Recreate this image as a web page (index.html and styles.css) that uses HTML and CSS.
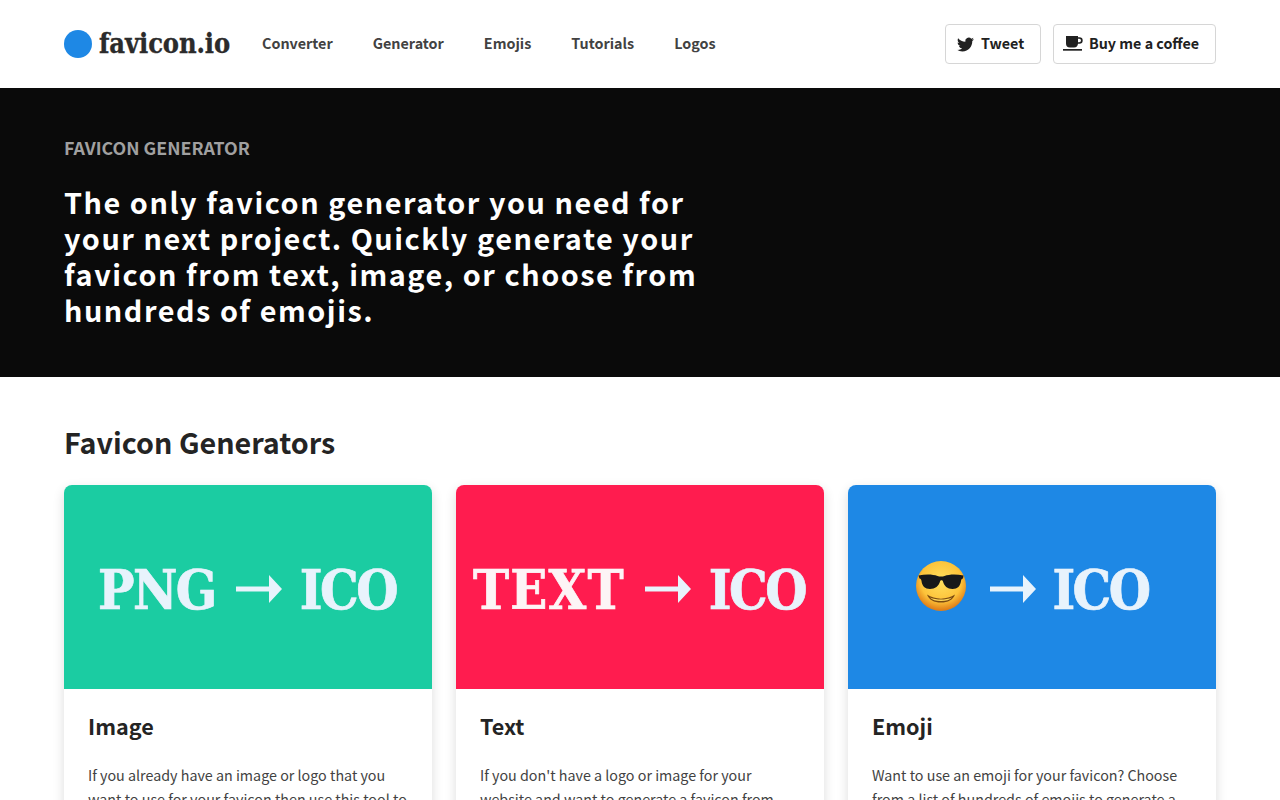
FILE: index.html
```html
<!DOCTYPE html>
<html lang="en">
<head>
<meta charset="utf-8">
<title>favicon.io</title>
<link rel="stylesheet" href="styles.css">
</head>
<body>
<header class="topbar">
  <a class="logo"><span class="logo-dot"></span><span class="logo-text">favicon.io</span></a>
  <nav class="nav">
    <a>Converter</a><a>Generator</a><a>Emojis</a><a>Tutorials</a><a>Logos</a>
  </nav>
  <div class="actions">
    <a class="btn btn-tweet">
      <svg class="ico-tw" viewBox="0 0 24 24"><path d="M23.95 4.57a10 10 0 0 1-2.82.77 4.96 4.96 0 0 0 2.16-2.72c-.95.55-2 .95-3.12 1.18a4.92 4.92 0 0 0-8.38 4.48C7.69 8.1 4.07 6.13 1.64 3.16a4.82 4.82 0 0 0-.67 2.48c0 1.71.87 3.21 2.19 4.1a4.9 4.9 0 0 1-2.23-.62v.06a4.92 4.92 0 0 0 3.95 4.83 5 5 0 0 1-2.21.08 4.94 4.94 0 0 0 4.6 3.42A9.87 9.87 0 0 1 0 19.54a14 14 0 0 0 7.56 2.21c9.05 0 14-7.5 14-13.98 0-.21 0-.42-.02-.63a9.94 9.94 0 0 0 2.41-2.57z"/></svg>
      <span class="btn-label">Tweet</span>
    </a>
    <a class="btn btn-coffee">
      <svg class="ico-cf" viewBox="0 0 20 16"><path fill-rule="evenodd" d="M3 0h12v1.2h1.4a3.3 3.3 0 0 1 0 6.6H15A4 4 0 0 1 11 11.4H7A4 4 0 0 1 3 7.4zM15 2.800v3.400h1.300a1.700 1.700 0 0 0 0-3.400z"/><rect x="0" y="13" width="19" height="1.7"/></svg>
      <span class="btn-label">Buy me a coffee</span>
    </a>
  </div>
</header>

<section class="hero">
  <p class="eyebrow">FAVICON GENERATOR</p>
  <h1 class="headline">The only favicon generator you need for your next project. Quickly generate your favicon from text, image, or choose from hundreds of emojis.</h1>
</section>

<main class="content">
  <h2 class="section-title">Favicon Generators</h2>
  <div class="cards">
    <article class="card">
      <div class="banner banner-green"><span class="b-word">PNG</span><span class="arrow"><svg viewBox="0 0 46 28"><path d="M0 11.500h33V0l13 14-13 14V16.500H0z"/></svg></span><span class="b-word b-ico">ICO</span></div>
      <div class="card-body">
        <h3 class="card-title">Image</h3>
        <p class="card-text">If you already have an image or logo that you want to use for your favicon then use this tool to convert it.</p>
      </div>
    </article>
    <article class="card">
      <div class="banner banner-red"><span class="b-word b-text">TEXT</span><span class="arrow"><svg viewBox="0 0 46 28"><path d="M0 11.500h33V0l13 14-13 14V16.500H0z"/></svg></span><span class="b-word b-ico">ICO</span></div>
      <div class="card-body">
        <h3 class="card-title">Text</h3>
        <p class="card-text">If you don't have a logo or image for your website and want to generate a favicon from text then use this tool.</p>
      </div>
    </article>
    <article class="card">
      <div class="banner banner-blue">
        <svg class="emoji" viewBox="0 0 52 52">
          <defs><radialGradient id="face" cx="50%" cy="40%" r="58%"><stop offset="0" stop-color="#ffe05e"/><stop offset=".7" stop-color="#fdc33a"/><stop offset="1" stop-color="#e07f18"/></radialGradient></defs>
          <circle cx="26" cy="26" r="25" fill="url(#face)"/>
          <path d="M3.500 15.500c7-1.500 14-1.500 19 .5 2 .8 5 .8 7 0 5-2 12-2 19-.5l-.5 3c-1.200.3-1.800 1-2 2.500-.6 5-3.500 8-8.500 8s-8.500-3-9.500-7.500c-.4-1.800-2.600-1.800-3 0C24 26 20 29 15 29s-8-3-8.500-8c-.2-1.500-.8-2.200-2-2.500z" fill="#17181a"/>
          <path d="M12 34.500c8 5.500 20 5.500 28 0-2 5.500-7 8-14 8s-12-2.500-14-8z" fill="#7a4a12"/>
          <path d="M15 37.500c7 2.800 15 2.800 22 0-2 2.500-6 3.500-11 3.500s-9-1-11-3.500z" fill="#ffd95a"/>
        </svg>
        <span class="arrow"><svg viewBox="0 0 46 28"><path d="M0 11.500h33V0l13 14-13 14V16.500H0z"/></svg></span><span class="b-word b-ico">ICO</span>
      </div>
      <div class="card-body">
        <h3 class="card-title">Emoji</h3>
        <p class="card-text">Want to use an emoji for your favicon? Choose from a list of hundreds of emojis to generate a favicon.</p>
      </div>
    </article>
  </div>
</main>
</body>
</html>
```
FILE: styles.css
```css
* { box-sizing: border-box; }
html, body { margin: 0; height: 800px; overflow: hidden; }
body { font-family: "Noto Sans CJK SC", "Noto Sans", sans-serif; color: #212121; background: #fff; }
a { color: inherit; text-decoration: none; }

.topbar { height: 88px; padding: 0 64px; display: flex; align-items: center; }
.logo { display: flex; align-items: center; width: 198px; }
.logo-dot { width: 28px; height: 28px; border-radius: 50%; background: #1e88e5; margin-right: 7px; }
.logo-text { font-family: "DejaVu Serif Condensed", "DejaVu Serif", serif; font-weight: 700; font-size: 27px; line-height: 32px; color: #2b2b2b; letter-spacing: -0.1px; -webkit-text-stroke: 0.3px #2b2b2b; }
.nav { display: flex; gap: 40px; font-size: 14.35px; font-weight: 700; color: #424242; line-height: 20px; padding-bottom: 2px; }
.actions { margin-left: auto; display: flex; gap: 12px; }
.btn { height: 40px; display: flex; align-items: center; border: 1px solid #d6d6d6; border-radius: 4px; font-size: 14.3px; font-weight: 700; color: #212121; line-height: 20px; }
.btn-label { padding-bottom: 2px; }
.btn-tweet { width: 96px; padding: 0 0 0 11px; gap: 7px; }
.btn-coffee { width: 163px; padding: 0 0 0 9px; gap: 6px; }
.ico-tw { width: 17px; height: 17px; fill: #212121; }
.ico-cf { width: 20px; height: 16px; fill: #212121; }

.hero { height: 289px; background: #0a0a0a; padding: 45px 64px 0; color: #fff; }
.eyebrow { margin: 0; font-size: 17.8px; font-weight: 700; line-height: 28px; color: #a0a0a0; }
.headline { margin: 23px 0 0; width: 660px; font-size: 28.8px; font-weight: 700; line-height: 36px; letter-spacing: 1.54px; }

.content { padding: 45px 64px 0; }
.section-title { margin: 0; font-size: 28.7px; font-weight: 700; line-height: 40px; color: #242424; }
.cards { margin-top: 23px; display: grid; grid-template-columns: repeat(3, 368px); gap: 24px; }
.card { border-radius: 8px; overflow: hidden; background: #fff; box-shadow: 0 4px 12px rgba(0,0,0,.14); height: 400px; }
.banner { height: 204px; display: flex; align-items: center; justify-content: center; color: #e8f3fc; gap: 20px; padding-top: 4px; }
.banner-green { background: #1bcca2; }
.banner-red { background: #ff1c4f; }
.banner-blue { background: #1e88e5; }
.b-word { font-family: "DejaVu Serif Condensed", "DejaVu Serif", serif; font-weight: 700; font-size: 54px; line-height: 64px; letter-spacing: -1.5px; -webkit-text-stroke: 0.7px currentColor; padding-top: 2px; }
.b-ico { letter-spacing: -2.5px; margin: 0 2px 0 -2px; }
.banner-blue .b-ico { margin: 0 4px 0 -4px; }
.b-text { letter-spacing: 1.2px; color: #fdf4f6; }
.arrow { display: flex; }
.arrow svg { width: 46px; height: 28px; fill: #e8f3fc; }
.emoji { width: 52px; height: 52px; margin: 0 3px 6px 4px; }
.card-body { padding: 23px 24px; }
.card-title { margin: 0; font-size: 21.6px; font-weight: 700; line-height: 28px; color: #242424; }
.card-text { margin: 23px 0 0; font-size: 14.3px; line-height: 24px; color: #424242; }
```
